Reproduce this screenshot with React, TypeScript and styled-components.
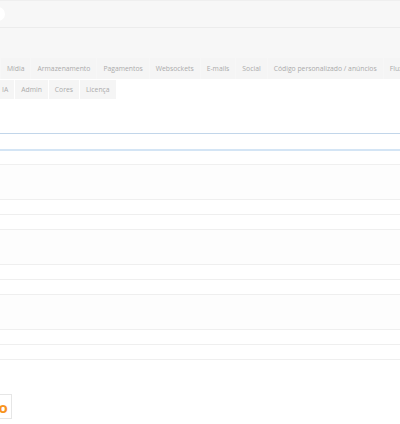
import React from 'react';
import styled, {createGlobalStyle} from 'styled-components';

const GlobalStyle = createGlobalStyle`
  html, body {
    margin: 0;
    padding: 0;
    background: #fff;
    overflow: hidden;
  }
  body {
    font-family: "Open Sans", "Liberation Sans", sans-serif;
  }
`;

const Page = styled.div`
  width: 400px;
  height: 424px;
  overflow: hidden;
  background: #fff;
`;

const TopBar = styled.div`
  height: 28px;
  background: #f7f7f7;
  border-top: 1px solid #efefef;
  border-bottom: 1px solid #ececec;
  box-sizing: border-box;
  display: flex;
  align-items: center;
`;

const Avatar = styled.div`
  width: 14px;
  height: 14px;
  border-radius: 50%;
  background: #fff;
  margin-left: -9px;
`;

const Header = styled.div`
  background: #f7f7f7;
  padding-top: 30px;
`;

const TabRow = styled.div<{ offset: number }>`
  display: flex;
  gap: 1px;
  margin-left: ${p => p.offset}px;
  white-space: nowrap;
`;

const Tab = styled.div<{ short?: boolean }>`
  flex: none;
  height: ${p => (p.short ? 19 : 21)}px;
  padding: 0 6px;
  display: flex;
  align-items: center;
  background: #f5f5f5;
  color: #ababab;
  font-size: 6.8px;
`;

const Second = styled.div`
  background: #fff;
  padding-top: 1px;
`;

const Input = styled.div`
  margin-top: 34px;
  height: 15px;
  border-top: 1px solid #c2d6ea;
  border-bottom: 2px solid #d4e5f5;
`;

const Rows = styled.div`
  margin-top: 13px;
  border-top: 1px solid #f0f0f0;
`;

const Row = styled.div<{ tall?: boolean }>`
  height: ${p => (p.tall ? 34 : 14)}px;
  background: ${p => (p.tall ? '#fdfdfd' : '#fff')};
  border-bottom: 1px solid #efefef;
`;

const Footer = styled.div`
  margin-top: 34px;
`;

const SaveButton = styled.div`
  display: inline-flex;
  align-items: center;
  height: 23px;
  margin-left: -37px;
  padding: 0 3px 0 4px;
  border: 1px solid #e6e6e6;
  color: #f7941d;
  font-weight: 700;
  font-size: 15px;
  background: #fff;
`;

const row1 = ['Mídia', 'Armazenamento', 'Pagamentos', 'Websockets', 'E-mails', 'Social', 'Código personalizado / anúncios', 'Fluxos'];
const row2 = ['IA', 'Admin', 'Cores', 'Licença'];

const App = () => (
    <Page>
        <GlobalStyle/>
        <TopBar>
            <Avatar/>
        </TopBar>
        <Header>
            <TabRow offset={1}>
                {row1.map(t => <Tab key={t}>{t}</Tab>)}
            </TabRow>
        </Header>
        <Second>
            <TabRow offset={-4}>
                {row2.map(t => <Tab key={t} short>{t}</Tab>)}
            </TabRow>
        </Second>
        <Input/>
        <Rows>
            {[0, 1, 2].map(i => (
                <React.Fragment key={i}>
                    <Row tall/>
                    <Row/>
                    <Row/>
                </React.Fragment>
            ))}
        </Rows>
        <Footer>
            <SaveButton>Salvo</SaveButton>
        </Footer>
    </Page>
);

export default App;
